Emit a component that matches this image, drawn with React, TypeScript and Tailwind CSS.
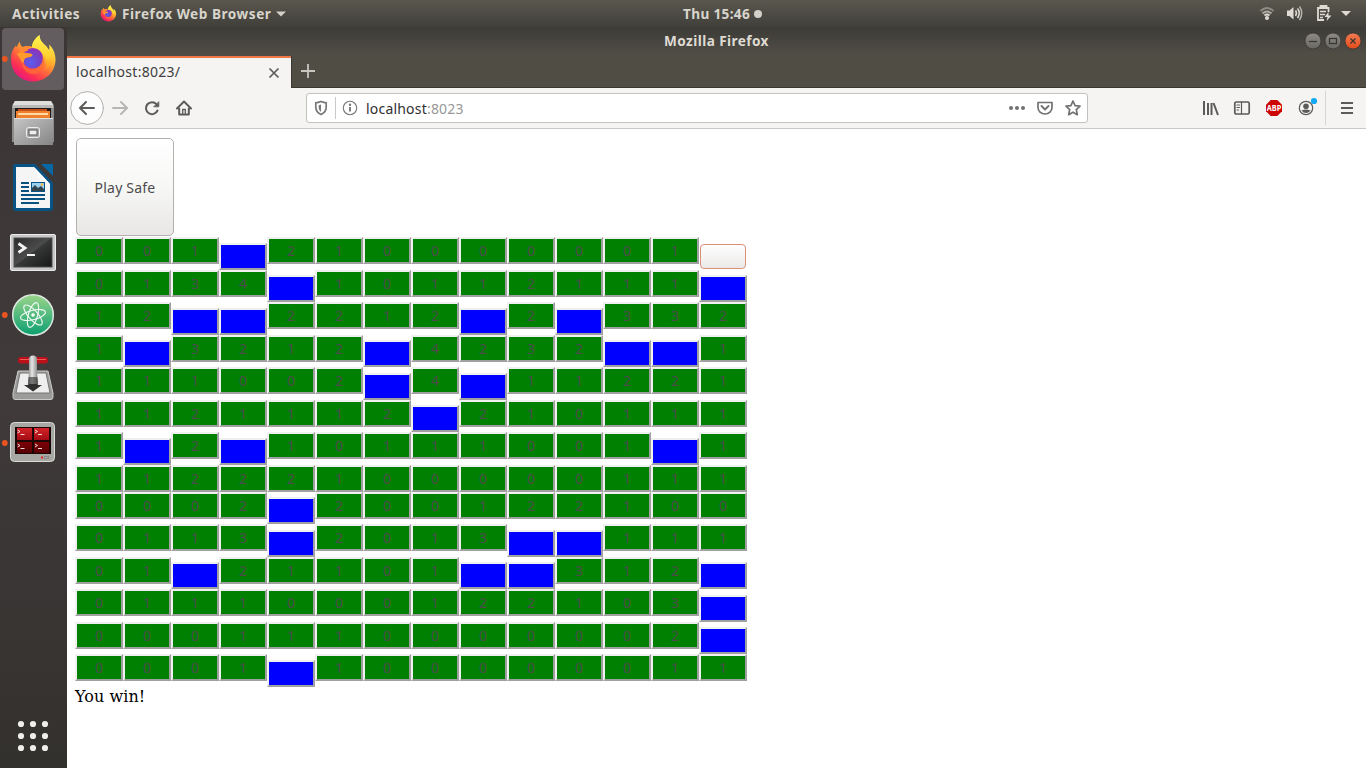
import React from "react";

const ROWS: { height: string; drop: string; cells: string }[] = [
  { height: "h-[33px]", drop: "mt-[6px]", cells: "001B210000001W" },
  { height: "h-[32px]", drop: "mt-[5px]", cells: "0134B10112111B" },
  { height: "h-[33px]", drop: "mt-[6px]", cells: "12BB2212B2B332" },
  { height: "h-[32px]", drop: "mt-[5px]", cells: "1B3212B4232BB1" },
  { height: "h-[33px]", drop: "mt-[6px]", cells: "111002B4B11221" },
  { height: "h-[32px]", drop: "mt-[5px]", cells: "1121112B210111" },
  { height: "h-[33px]", drop: "mt-[6px]", cells: "1B2B10111001B1" },
  { height: "h-[27px]", drop: "mt-[5px]", cells: "11222100000111" },
  { height: "h-[32px]", drop: "mt-[5px]", cells: "0002B200122100" },
  { height: "h-[33px]", drop: "mt-[6px]", cells: "0113B2013BB111" },
  { height: "h-[32px]", drop: "mt-[5px]", cells: "01B21101BB312B" },
  { height: "h-[33px]", drop: "mt-[6px]", cells: "0111000122103B" },
  { height: "h-[32px]", drop: "mt-[5px]", cells: "0001110000002B" },
  { height: "h-[33px]", drop: "mt-[6px]", cells: "0001B100000011" },
];

const BEVEL =
  "w-[48px] h-[27px] shrink-0 border-2 border-t-[#f0f0f0] border-l-[#f0f0f0] border-b-[#a0a0a0] border-r-[#a0a0a0]";

function Cell({ value, drop }: { value: string; drop: string }) {
  if (value === "W") {
    return (
      <button className="mx-px mt-[7px] h-[25px] w-[46px] shrink-0 rounded-[4px] border border-[#dc8f78] bg-linear-to-b from-white to-[#ebe9e8]" />
    );
  }
  if (value === "B") return <button className={`${BEVEL} ${drop} bg-[#0000ff]`} />;
  return (
    <button className={`${BEVEL} flex items-center justify-center bg-[#008000] text-[14px] leading-[20px] text-[#4c4c4c]`}>
      {value}
    </button>
  );
}

function FirefoxArt({ id }: { id: string }) {
  return (
    <g>
      <defs>
        <linearGradient id={`${id}b`} x1="0.85" y1="0.1" x2="0.25" y2="1">
          <stop offset="0" stopColor="#fff44f" />
          <stop offset="0.3" stopColor="#ffbd2f" />
          <stop offset="0.55" stopColor="#ff7139" />
          <stop offset="0.8" stopColor="#fb2d55" />
          <stop offset="1" stopColor="#e31587" />
        </linearGradient>
        <linearGradient id={`${id}y`} x1="0.5" y1="0" x2="0.5" y2="1">
          <stop offset="0" stopColor="#fff44f" />
          <stop offset="0.6" stopColor="#ffd130" />
          <stop offset="1" stopColor="#ff8a1f" />
        </linearGradient>
        <radialGradient id={`${id}g`} cx="0.4" cy="0.7" r="0.75">
          <stop offset="0" stopColor="#5b5cf0" />
          <stop offset="0.6" stopColor="#7542c5" />
          <stop offset="1" stopColor="#9a2bb8" />
        </radialGradient>
      </defs>
      <path
        d="M20 14.5C19.8 17 21 19.2 23 20C26 18.5 29 18.5 32 20C32 15.500 35.500 11 39.500 8C39.500 13 42 15.500 46 19C47.500 20.500 48 22.500 48.500 24C49.600 22 49.600 20 49 17.500C53.500 21.500 55.500 27 55.500 32.500C55.500 45 45.500 54.500 33 54.500C20.500 54.500 11 45 11 32.500C11 26 13 21.500 16 18.500L16.500 20.500C17.500 18 18.500 16 20 14.500Z"
        fill={`url(#${id}b)`}
      />
      <path
        d="M39.500 8C39.500 13 42 15.500 46 19C53 25.500 53 37 46 43C48 37 46.500 31 42.500 27C39.500 23.500 34.500 22.500 32 20C32 15.500 35.500 11 39.500 8Z"
        fill={`url(#${id}y)`}
      />
      <circle cx="32.800" cy="31.300" r="10.300" fill={`url(#${id}g)`} />
      <path d="M16.500 27C20 25 23 25.500 26.500 26C29 26.300 32.500 26.500 32.500 28C32 30 28.500 30.500 26 31C23.500 32 24.500 34.500 23 36.500C20.500 34 19.500 29 16.500 27Z" fill="#ff9a2b" />
      <path d="M23 20C26 18.500 29.500 18.500 32 20C29.500 20.500 28 22 27.500 24C24.500 24 21 25.500 18.500 26C20 23.500 21.500 21.500 23 20Z" fill="#ff8a34" />
      <path d="M23 35C24.500 42 32 44.500 38 41C42 38.500 43.500 34 42 29.500C47 36 43.500 46 34.500 47C26.500 47.500 21 41 23 35Z" fill="#ff6a35" opacity=".8" />
    </g>
  );
}

function DockItem({ children, running }: { children: React.ReactNode; running?: boolean }) {
  return (
    <svg className="h-16 w-[67px] shrink-0" viewBox="0 0 67 64">
      {children}
      {running && <circle cx="4.800" cy="32" r="2.900" fill="#e95420" />}
    </svg>
  );
}

function Dock() {
  return (
    <div className="flex w-[67px] shrink-0 flex-col bg-linear-to-b from-[#3b3635] via-[#403a3b] to-[#33312e]">
      <DockItem running>
        <rect x="2" y="1" width="62" height="62" rx="4" fill="#635d5f" />
        <FirefoxArt id="fxl" />
      </DockItem>
      <DockItem>
        <defs>
          <linearGradient id="cab" x1="0" y1="0" x2="1" y2="1">
            <stop offset="0" stopColor="#c6c6c6" />
            <stop offset="1" stopColor="#858585" />
          </linearGradient>
        </defs>
        <path d="M15 10H51L54 16V51H12V16Z" fill="#8b8b8b" />
        <path d="M15 10H51L53.500 14H12.500Z" fill="#dedede" />
        <rect x="12.500" y="14" width="41" height="3" fill="#b9b9b9" />
        <rect x="15" y="17" width="36" height="11" fill="#1d1c1a" />
        <path d="M18 18H47V20H18Z" fill="#c64e19" />
        <path d="M16 20H50V28H16Z" fill="#ef812d" />
        <path d="M18 22H48V24H18Z" fill="#ffd8a7" />
        <rect x="14" y="27" width="39" height="27" fill="url(#cab)" />
        <path d="M14 27.500H53" stroke="#e2e2e2" />
        <rect x="26.500" y="36.500" width="13" height="10" rx="2" fill="#aaa" stroke="#eee" />
        <rect x="29" y="39" width="8" height="5" fill="#eee" stroke="#555" />
      </DockItem>
      <DockItem>
        <path d="M15 9H35L53 28V53Q53 56 50 56H16Q13 56 13 53V11Q13 9 15 9Z" fill="#075385" />
        <path d="M41 9H53V21Z" fill="#0868a4" />
        <path d="M16 12H34L50 29V53H16Z" fill="#f5f5f5" />
        <path d="M34 12L50 29L40 24Z" fill="#fff" />
        <path d="M21 28H29M21 32H29M21 36H29M21 40H45M21 44H45M21 48H39" stroke="#09517f" strokeWidth="2" />
        <rect x="31.500" y="27.500" width="13" height="9" fill="#9bd1ef" stroke="#075385" />
        <path d="M32 36V33L35 30L38 33L41 31L44 34V36Z" fill="#34444c" />
        <circle cx="42" cy="29.500" r="1.300" fill="#f4b43b" />
      </DockItem>
      <DockItem>
        <defs>
          <linearGradient id="trm" x1="0" y1="0" x2="1" y2="1">
            <stop offset="0" stopColor="#292b2a" />
            <stop offset=".48" stopColor="#4c4c4c" />
            <stop offset=".5" stopColor="#373838" />
            <stop offset="1" stopColor="#151615" />
          </linearGradient>
        </defs>
        <rect x="10.500" y="15.500" width="45" height="36" rx="1.500" fill="#c8c8c8" stroke="#e9e9e9" />
        <rect x="14" y="19" width="38" height="29" fill="url(#trm)" stroke="#4c4c4c" />
        <path d="M18.500 24.500L25 29L18.500 33.500" fill="none" stroke="#f3f3f3" strokeWidth="2.800" />
        <path d="M27 36H35" stroke="#f3f3f3" strokeWidth="2" />
      </DockItem>
      <DockItem running>
        <defs>
          <linearGradient id="atm" x1="0" y1="0" x2="0" y2="1">
            <stop offset="0" stopColor="#9bd58c" />
            <stop offset="1" stopColor="#0b9f70" />
          </linearGradient>
        </defs>
        <circle cx="33" cy="32" r="20.300" fill="url(#atm)" stroke="#dfe8e3" strokeWidth="1.500" />
        <g fill="none" stroke="#f0faf4" strokeWidth="1.100">
          <ellipse cx="33" cy="32" rx="12.800" ry="4.600" transform="rotate(-14 33 32)" />
          <ellipse cx="33" cy="32" rx="12.800" ry="4.600" transform="rotate(48 33 32)" />
          <ellipse cx="33" cy="32" rx="12.800" ry="4.600" transform="rotate(106 33 32)" />
        </g>
        <circle cx="33" cy="32" r="1.800" fill="#fff" />
      </DockItem>
      <DockItem>
        <defs>
          <linearGradient id="lvr" x1="0" y1="0" x2="1" y2="0">
            <stop offset="0" stopColor="#858585" />
            <stop offset=".4" stopColor="#e6e6e6" />
            <stop offset="1" stopColor="#808080" />
          </linearGradient>
        </defs>
        <path d="M18 24H48L53 46V50Q53 52.500 51 52.500H15Q13 52.500 13 50V46Z" fill="#9c9d9a" stroke="#c9cac6" />
        <path d="M20 26H46L50 46H16Z" fill="#eee" stroke="#777" />
        <rect x="18" y="10" width="30" height="6.500" rx="3.200" fill="#bd1119" />
        <path d="M20 12.500H46" stroke="#f15b5f" />
        <path d="M28.500 32H37.500V38H42L33 44.500L24 38H28.500Z" fill="#30312f" />
        <path d="M29 12Q29 8.500 33 8.500Q37 8.500 37 12V25L38 37H28L29 25Z" fill="url(#lvr)" />
        <path d="M28.600 30H37.400L38 38H28Z" fill="#30312f" opacity=".6" />
      </DockItem>
      <DockItem running>
        <defs>
          <linearGradient id="trd" x1="0" y1="0" x2="0" y2="1">
            <stop offset="0" stopColor="#d22328" />
            <stop offset=".48" stopColor="#a30d13" />
            <stop offset=".52" stopColor="#810006" />
            <stop offset="1" stopColor="#560005" />
          </linearGradient>
        </defs>
        <rect x="10.500" y="11.500" width="44" height="39" rx="4" fill="#a7a8a4" stroke="#dadbd7" />
        <rect x="15" y="16" width="36" height="27" fill="#1c0707" />
        <path d="M17 17H32V29H17ZM34 17H49V29H34ZM17 31H32V42H17ZM34 31H49V42H34Z" fill="url(#trd)" />
        <g fill="none" stroke="#f1dada">
          <path d="M17.500 19L20 20.500L17.500 22M20.500 23.500H24.500M35 19L37.500 20.500L35 22M38 23.500H42M17.500 33L20 34.500L17.500 36M20.500 37.500H24.500M35 33L37.500 34.500L35 36M38 37.500H42" />
        </g>
        <path d="M41 46.500H43" stroke="#e52222" strokeWidth="2" />
        <rect x="44.500" y="45.500" width="4" height="2" fill="none" stroke="#888" />
      </DockItem>
      <svg className="mt-auto h-16 w-[67px]" viewBox="0 0 67 64" fill="#eeeeec">
        {[20, 32, 44].map((y) => [21, 33, 45].map((x) => <circle key={`${x}-${y}`} cx={x} cy={y} r="3.100" />))}
      </svg>
    </div>
  );
}

function TopBar() {
  return (
    <div className="grid h-[27px] shrink-0 grid-cols-[667px_100px_1fr] items-center bg-linear-to-b from-[#5a574e] to-[#403f3a] text-[13.600px] leading-[20px] font-bold text-[#d8d5cd]">
      <div className="flex items-center pl-[12px]">
        <span className="w-[88px] tracking-[0.500px]">Activities</span>
        <svg className="h-[17px] w-[17px]" viewBox="10 7 47 49">
          <FirefoxArt id="fxs" />
        </svg>
        <span className="ml-[5px] w-[150px] tracking-[0.540px] whitespace-nowrap">Firefox Web Browser</span>
        <svg className="ml-[3px] h-[6px] w-[12px]" viewBox="0 0 12 6" fill="#d3d0c8">
          <path d="M1 .5H11L6 5.500Z" />
        </svg>
      </div>
      <div className="flex items-center pl-[16px] whitespace-nowrap">
        <span className="w-[68px] tracking-[0.350px]">Thu 15:46</span>
        <span className="ml-[3px] h-[8px] w-[8px] shrink-0 rounded-full bg-[#d3d0c8]" />
      </div>
      <svg className="ml-auto h-[27px] w-[112px]" viewBox="1254 0 112 27">
        <g fill="none" stroke="#8f8c84" strokeWidth="1.800">
          <path d="M1260.500 11Q1267 5 1273.500 11" />
          <path d="M1262.500 13.500Q1267 9.500 1271.500 13.500" stroke="#aeaba3" />
          <path d="M1264.500 15.500Q1267 13.500 1269.500 15.500" stroke="#dfdbd2" />
        </g>
        <circle cx="1267" cy="18" r="2" fill="#dfdbd2" />
        <path d="M1287 10.500H1289.500L1293.500 7V19.500L1289.500 16H1287Z" fill="#dfdbd2" />
        <g fill="none" stroke="#dfdbd2" strokeWidth="1.500">
          <path d="M1295.500 10.500Q1297.500 13.200 1295.500 16" />
          <path d="M1297.500 8.500Q1301 13.200 1297.500 18" />
          <path d="M1299.500 6.500Q1304 13.200 1299.500 20" stroke="#b5b2aa" />
        </g>
        <path d="M1320.500 8V6H1326.500V8M1328.500 12V8H1318V20H1324" fill="none" stroke="#dfdbd2" strokeWidth="1.800" />
        <path d="M1320 11.500H1326M1320 14.500H1325M1320 17.500H1323" stroke="#dfdbd2" strokeWidth="1.500" />
        <path d="M1328.500 12L1324.500 17H1327.500L1326.500 21L1331.500 15.500H1328.500Z" fill="#dfdbd2" />
        <path d="M1341 11H1351L1346 16Z" fill="#dfdbd2" />
      </svg>
    </div>
  );
}

function WindowButton({ close, children }: { close?: boolean; children: React.ReactNode }) {
  return (
    <svg className="h-[20px] w-[20px]" viewBox="0 0 20 20">
      <defs>
        <linearGradient id={close ? "wc" : "wn"} x1="0" y1="0" x2="0" y2="1">
          <stop offset="0" stopColor={close ? "#f27b54" : "#8d8b83"} />
          <stop offset="1" stopColor={close ? "#e34c1b" : "#686760"} />
        </linearGradient>
      </defs>
      <circle cx="10" cy="10" r="8" fill={close ? "url(#wc)" : "url(#wn)"} stroke="#383732" strokeWidth=".8" />
      <g fill="none" stroke="#363530" strokeWidth="1.200">{children}</g>
    </svg>
  );
}

function TitleBar() {
  return (
    <div className="flex h-[61px] shrink-0 flex-col border-b border-[#393833] bg-linear-to-b from-[#3c3b37] via-[#504d45] via-45% to-[#504d45]">
      <div className="grid h-[28px] grid-cols-[1fr_auto_1fr] items-center">
        <span />
        <span className="text-[13.600px] leading-[20px] font-bold tracking-[0.420px] text-[#dfdbd2]">Mozilla Firefox</span>
        <div className="flex justify-end pr-[3px]">
          <WindowButton>
            <path d="M6 10.500H14" />
          </WindowButton>
          <WindowButton>
            <rect x="6.500" y="7.500" width="7" height="5" />
          </WindowButton>
          <WindowButton close>
            <path d="M7.500 7.500L12.500 12.500M12.500 7.500L7.500 12.500" />
          </WindowButton>
        </div>
      </div>
      <div className="-mb-px flex h-[33px] items-stretch pt-px">
        <div className="flex w-[224px] items-center justify-between border-t-2 border-t-[#f07746] bg-[#f5f4f2] pr-[11px] pl-[9px]">
          <span className="pb-[2px] text-[14px] leading-[20px] tracking-[0.280px] text-[#3d3d3d]">localhost:8023/</span>
          <svg className="h-[12px] w-[12px]" viewBox="0 0 12 12" stroke="#5b5b5b" strokeWidth="1.700">
            <path d="M1.500 1.500L10.500 10.500M10.500 1.500L1.500 10.500" />
          </svg>
        </div>
        <svg className="h-[32px] w-[34px] border-l border-[#393833]" viewBox="0 0 33 32" stroke="#c8c6c0" strokeWidth="1.800">
          <path d="M9 15H23M16 8V22" />
        </svg>
      </div>
    </div>
  );
}

function Tool({ children, faded }: { children: React.ReactNode; faded?: boolean }) {
  return (
    <div className="flex w-[32px] shrink-0 justify-center">
      <svg
        className={faded ? "h-4 w-4 overflow-visible opacity-40" : "h-4 w-4 overflow-visible"}
        viewBox="0 0 16 16"
        fill="none"
        stroke="#5c5b59"
        strokeWidth="2"
        strokeLinecap="round"
        strokeLinejoin="round"
      >
        {children}
      </svg>
    </div>
  );
}

function NavBar() {
  return (
    <div className="flex h-[41px] shrink-0 items-center border-b border-[#cbc9c6] bg-[#f5f4f2] pr-[3px] pl-[4px]">
      <Tool>
        <circle cx="8" cy="8" r="16.300" fill="#fdfdfd" stroke="#b2b1af" strokeWidth="1" />
        <path d="M15 8H1.500M7 2L1 8L7 14" />
      </Tool>
      <div className="ml-px flex">
        <Tool faded>
          <path d="M1 8H14.500M9 2L15 8L9 14" />
        </Tool>
        <Tool>
          <path d="M13.500 10.500A6 6 0 1 1 12.500 4.200" />
          <path d="M14.800 2V6.800H10Z" fill="#5c5b59" strokeWidth=".8" />
        </Tool>
        <Tool>
          <path d="M1 8.500L8 1.500L15 8.500M3.200 8.500V14.500H12.800V8.500" />
          <path d="M6.700 14V9.500H9.300V14" strokeWidth="1.300" />
        </Tool>
      </div>
      <div className="ml-[106px] flex h-[30px] w-[782px] items-center rounded-[3px] border border-[#c4c2bf] bg-white">
        <svg className="ml-[6px] h-4 w-4" viewBox="0 0 16 16" fill="none" stroke="#777" strokeWidth="1.700">
          <path d="M8 1.500C10 2.300 11.500 2.700 13.200 2.800V7C13.200 10.500 11 13.200 8 14.500C5 13.200 2.800 10.500 2.800 7V2.800C4.500 2.700 6 2.300 8 1.500Z" />
          <path d="M8 4.500L5.700 5.200V7.500C5.700 9.500 6.500 10.700 8 11.700Z" fill="#777" stroke="none" />
        </svg>
        <div className="ml-[6px] h-[22px] w-px bg-[#c9c9c9]" />
        <svg className="ml-[6px] h-4 w-4" viewBox="0 0 16 16" fill="none" stroke="#777" strokeWidth="1.100">
          <circle cx="8" cy="8" r="6.700" />
          <path d="M8 7V11.500" strokeWidth="1.900" />
          <circle cx="8" cy="4.700" r="1.200" fill="#777" stroke="none" />
        </svg>
        <span className="ml-[8px] pt-[2px] text-[14px] leading-[20px] tracking-[0.200px] text-[#303030]">
          localhost<span className="text-[#989898]">:8023</span>
        </span>
        <svg className="ml-auto h-[20px] w-[82px]" viewBox="0 0 82 20" fill="none" stroke="#717171" strokeWidth="1.700" strokeLinejoin="round">
          <g fill="#717171" stroke="none">
            <circle cx="6" cy="10" r="2" />
            <circle cx="12" cy="10" r="2" />
            <circle cx="18" cy="10" r="2" />
          </g>
          <path d="M33 4.500H47V9.500A7 6.500 0 0 1 33 9.500Z" />
          <path d="M36.500 8L40 11.500L43.500 8" strokeLinecap="round" strokeWidth="1.900" />
          <path d="M68 3L70.100 7.600L75 8.200L71.300 11.700L72.300 16.700L68 14.200L63.700 16.700L64.700 11.700L61 8.200L65.900 7.600Z" />
        </svg>
      </div>
      <div className="ml-auto flex items-center">
        <Tool>
          <path d="M2 1V15M6 3V15M9.500 3V15M11.500 3L16 15" strokeLinecap="butt" />
        </Tool>
        <Tool>
          <rect x=".8" y="2" width="14.400" height="12" rx="1.500" strokeWidth="1.700" />
          <path d="M7.500 2V14M3 5H5.500M3 7.500H5.500M3 10H4.500" strokeWidth="1.200" />
        </Tool>
        <div className="flex w-[32px] justify-center">
          <svg className="h-4 w-4" viewBox="0 0 16 16">
            <path d="M4.700 0H11.300L16 4.700V11.300L11.300 16H4.700L0 11.300V4.700Z" fill="#cc0505" />
            <text x="8" y="10.900" textAnchor="middle" fontSize="8" fontWeight="700" fill="#fff" textLength="14.500" lengthAdjust="spacingAndGlyphs">ABP</text>
          </svg>
        </div>
        <Tool>
          <circle cx="8" cy="8" r="6.700" strokeWidth="1.200" />
          <circle cx="8" cy="6.300" r="2.800" fill="#5c5b59" stroke="none" />
          <path d="M3.500 10.500Q8 8.300 12.500 10.500Q10.500 13 8 13Q5.500 13 3.500 10.500Z" fill="#5c5b59" stroke="none" />
          <circle cx="16" cy="1" r="3.100" fill="#12a9f4" stroke="none" />
        </Tool>
        <div className="ml-[3px] h-[34px] w-px bg-[#d8d6d3]" />
        <div className="ml-[5px]">
          <Tool>
            <path d="M2 3H14M2 8H14M2 13H14" strokeWidth="1.900" strokeLinecap="butt" />
          </Tool>
        </div>
      </div>
    </div>
  );
}

function Page() {
  return (
    <div className="flex flex-1 flex-col items-start bg-white pt-[9px] pl-[8px]">
      <button className="mb-px ml-px h-[98px] w-[98px] rounded-[5px] border border-[#b3b1ad] bg-linear-to-b from-white via-[#f7f7f6] to-[#e8e7e5] text-[14px] tracking-[0.200px] text-[#4c4c4c]">
        Play Safe
      </button>
      {ROWS.map((row, r) => (
        <div key={r} className={`flex items-start ${row.height}`}>
          {row.cells.split("").map((value, c) => (
            <Cell key={c} value={value} drop={row.drop} />
          ))}
        </div>
      ))}
      <p className="font-['DejaVu_Serif',serif] text-[16px] leading-[19px] tracking-[0.080px] text-black">You win!</p>
    </div>
  );
}

export default function App() {
  return (
    <div className="flex h-[768px] w-[1366px] flex-col overflow-hidden font-['Noto_Sans',sans-serif]">
      <TopBar />
      <div className="flex min-h-0 flex-1">
        <Dock />
        <div className="flex min-w-0 flex-1 flex-col">
          <TitleBar />
          <NavBar />
          <Page />
        </div>
      </div>
    </div>
  );
}
